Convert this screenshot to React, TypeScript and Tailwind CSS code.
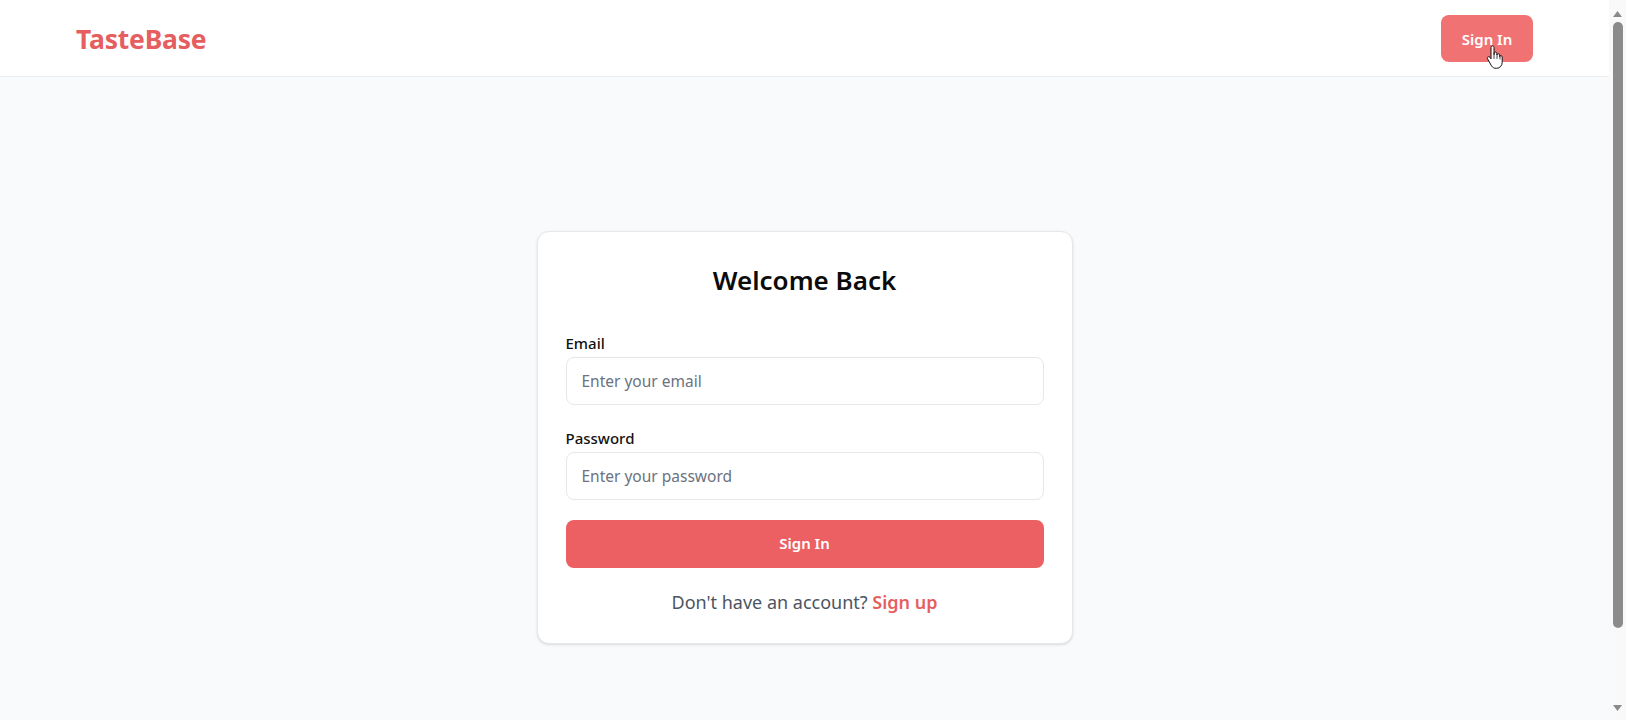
import { useState } from "react"

const font = { fontFamily: '"Noto Sans", "Open Sans", sans-serif' }

function HandCursor() {
    return (
        <svg className="absolute left-[44px] top-[30px] w-[20px] h-[24px] pointer-events-none" viewBox="0 0 20 24">
            <path
                d="M6 2.5c0-1 .7-1.6 1.5-1.6S9 1.5 9 2.5v7l.2-1.2c.2-.9 1-1.3 1.7-1.1.7.2 1 .8 1 1.5v1.2c.2-.8.9-1.2 1.6-1.1.7.1 1.1.7 1.1 1.4v1.4c.2-.7.9-1.1 1.6-.9.6.2 1 .7 1 1.4v5.3c0 3.2-2.4 5.9-5.6 5.9H11c-2 0-3.4-.9-4.5-2.4L2.6 14c-.5-.7-.4-1.6.3-2 .7-.5 1.6-.3 2.1.4L6 13.8V2.5z"
                fill="#fff"
                stroke="#111"
                strokeWidth="1"
                strokeLinejoin="round"
            />
            <path d="M9 9.5v4M12 10v3.5M15 11v3" stroke="#111" strokeWidth="0.8" strokeLinecap="round" />
        </svg>
    )
}

// 瀏覽器捲軸（截圖中可見）
function Scrollbar() {
    return (
        <div className="w-[17px] h-full bg-[#f9f9fa] flex flex-col items-center">
            <svg className="w-[9px] h-[6px] mt-[11px]" viewBox="0 0 9 6">
                <path d="M4.5 0L9 6H0z" fill="#8a8a8a" />
            </svg>
            <div className="w-[10px] h-[606px] mt-[5px] rounded-full bg-[#8b8b8b]" />
            <div className="flex-1" />
            <svg className="w-[9px] h-[6px] mb-[9px]" viewBox="0 0 9 6">
                <path d="M0 0h9L4.5 6z" fill="#8a8a8a" />
            </svg>
        </div>
    )
}

export default function App() {
    const [email, setEmail] = useState("")
    const [password, setPassword] = useState("")

    return (
        <div className="flex h-screen overflow-hidden bg-[#f9fafb] text-[#111827]" style={font}>
            <div className="flex-1 overflow-hidden">
                {/* 頂部導覽列 */}
                <header className="h-[77px] bg-white border-b border-[#eceef1] flex items-center justify-between px-[76px]">
                    <span className="mt-[3px] text-[26.5px] font-bold text-[#e65f60] tracking-[-0.2px]">TasteBase</span>
                    <div className="relative">
                        <button className="h-[47px] w-[92px] pt-[2px] rounded-lg bg-[#f07273] text-white text-[15px] font-semibold">
                            Sign In
                        </button>
                        <HandCursor />
                    </div>
                </header>

                {/* 登入卡片置中 */}
                <main className="min-h-screen flex items-center justify-center">
                    <div className="w-[536px] bg-white border border-[#e5e7eb] rounded-xl shadow-sm px-7 pt-[27px] pb-[27px]">
                        <h1 className="text-[26px] leading-[42px] font-semibold text-center text-[#0b0b0b] mb-[30px]">
                            Welcome Back
                        </h1>

                        <div className="mb-[21px]">
                            <label className="block text-[15px] font-medium leading-6 mb-[2px] text-[#111]">Email</label>
                            <input
                                type="email"
                                value={email}
                                onChange={(e) => setEmail(e.target.value)}
                                placeholder="Enter your email"
                                className="w-full h-[48px] px-[15px] rounded-lg border border-[#e5e7eb] bg-white text-[15.5px] placeholder:text-[#6b7280] outline-none"
                            />
                        </div>

                        <div className="mb-5">
                            <label className="block text-[15px] font-medium leading-6 mb-[2px] text-[#111]">Password</label>
                            <input
                                type="password"
                                value={password}
                                onChange={(e) => setPassword(e.target.value)}
                                placeholder="Enter your password"
                                className="w-full h-[48px] px-[15px] rounded-lg border border-[#e5e7eb] bg-white text-[15.5px] placeholder:text-[#6b7280] outline-none"
                            />
                        </div>

                        <button className="w-full h-[48px] rounded-lg bg-[#ec5f63] text-white text-[15px] font-semibold">
                            Sign In
                        </button>

                        <p className="mt-5 text-center text-[18px] leading-7 text-[#4b5563]">
                            Don't have an account? <a className="font-semibold text-[#e65f60]">Sign up</a>
                        </p>
                    </div>
                </main>
            </div>
            <Scrollbar />
        </div>
    )
}
